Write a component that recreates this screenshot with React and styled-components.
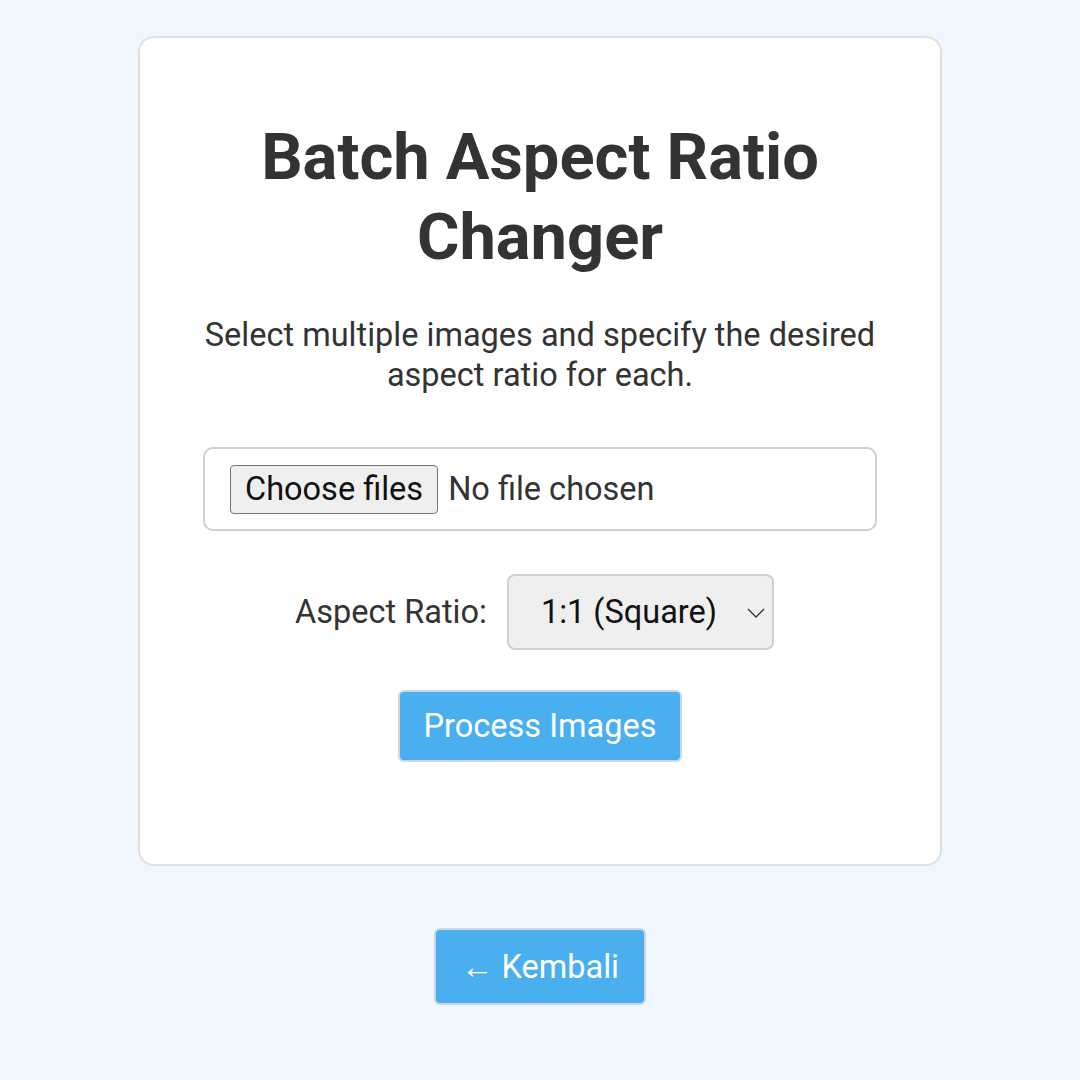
import React from "react";
import styled, { createGlobalStyle } from "styled-components";

const GlobalStyle = createGlobalStyle`
    * {
        box-sizing: border-box;
    }
    body {
        margin: 0;
        background: #eff6fe;
        font-family: Roboto, "Liberation Sans", sans-serif;
        color: #333;
    }
`;

const Page = styled.div`
    min-height: 1080px;
    display: flex;
    flex-direction: column;
    align-items: center;
    padding-top: 36px;
`;
const Card = styled.div`
    width: 804px;
    background-color: #fff;
    border: 2px solid #e0e0e0;
    border-radius: 16px;
    padding: 79px 63px 102px;
    display: flex;
    flex-direction: column;
    align-items: center;
`;
const Title = styled.h1`
    margin: 0;
    font-size: 65px;
    line-height: 80px;
    font-weight: 700;
    text-align: center;
    color: #333;
    width: 620px;
`;
const Intro = styled.p`
    margin: 38px 0 0;
    font-size: 32.5px;
    line-height: 40px;
    text-align: center;
    white-space: nowrap;
    color: #333;
`;
const FileBox = styled.label`
    margin-top: 52px;
    width: 100%;
    height: 84px;
    border: 2px solid #d0d0d0;
    border-radius: 10px;
    display: flex;
    align-items: center;
    gap: 10px;
    padding: 0 25px;
    font-size: 32.5px;
    color: #333;
    cursor: pointer;
    input {
        display: none;
    }
`;
const FileButton = styled.span`
    display: flex;
    align-items: center;
    height: 49px;
    padding: 0 14px;
    font-size: 32.5px;
    color: #111;
    background: #efefef;
    border: 1.5px solid #767676;
    border-radius: 4px;
`;
const Row = styled.div`
    margin-top: 43px;
    margin-right: 11px;
    display: flex;
    align-items: center;
    gap: 20px;
`;
const Label = styled.label`
    font-size: 32.5px;
    color: #333;
`;
const Select = styled.select`
    appearance: none;
    width: 267px;
    height: 76px;
    font-family: Roboto, "Liberation Sans", sans-serif;
    font-size: 32.5px;
    color: #111;
    background: #efefef;
    border: 2px solid #cfcfcf;
    border-radius: 8px;
    padding: 0 0 0 32px;
`;
const SelectWrap = styled.div`
    position: relative;
    display: flex;
    svg {
        position: absolute;
        right: 8px;
        top: 33px;
        pointer-events: none;
    }
`;
const Button = styled.button`
    font-family: Roboto, "Liberation Sans", sans-serif;
    font-size: 32.5px;
    color: #fff;
    background-color: #4aafef;
    border: 2px solid #cfd6dc;
    border-radius: 6px;
    padding: 0 ${(p) => p.$pad}px;
    height: ${(p) => p.$height}px;
    margin-top: ${(p) => p.$top}px;
    cursor: pointer;
`;

const App = () => {
    return (
        <>
            <GlobalStyle />
            <Page>
                <Card>
                    <Title>Batch Aspect Ratio Changer</Title>
                    <Intro>
                        Select multiple images and specify the desired
                        <br />
                        aspect ratio for each.
                    </Intro>
                    <FileBox>
                        <input type="file" multiple accept="image/*" />
                        <FileButton>Choose files</FileButton>
                        No file chosen
                    </FileBox>
                    <Row>
                        <Label htmlFor="ratio">Aspect Ratio:</Label>
                        <SelectWrap>
                            <Select id="ratio" defaultValue="1:1">
                                <option value="1:1">1:1 (Square)</option>
                                <option value="4:3">4:3</option>
                                <option value="16:9">16:9</option>
                            </Select>
                            <svg width="20" height="12" viewBox="0 0 20 12" fill="none">
                                <path d="M2 2l8 8 8-8" stroke="#333" strokeWidth="1.3" />
                            </svg>
                        </SelectWrap>
                    </Row>
                    <Button $height={72} $top={40} $pad={24}>Process Images</Button>
                </Card>
                <Button $height={77} $top={62} $pad={25}>← Kembali</Button>
            </Page>
        </>
    );
};

export default App;
